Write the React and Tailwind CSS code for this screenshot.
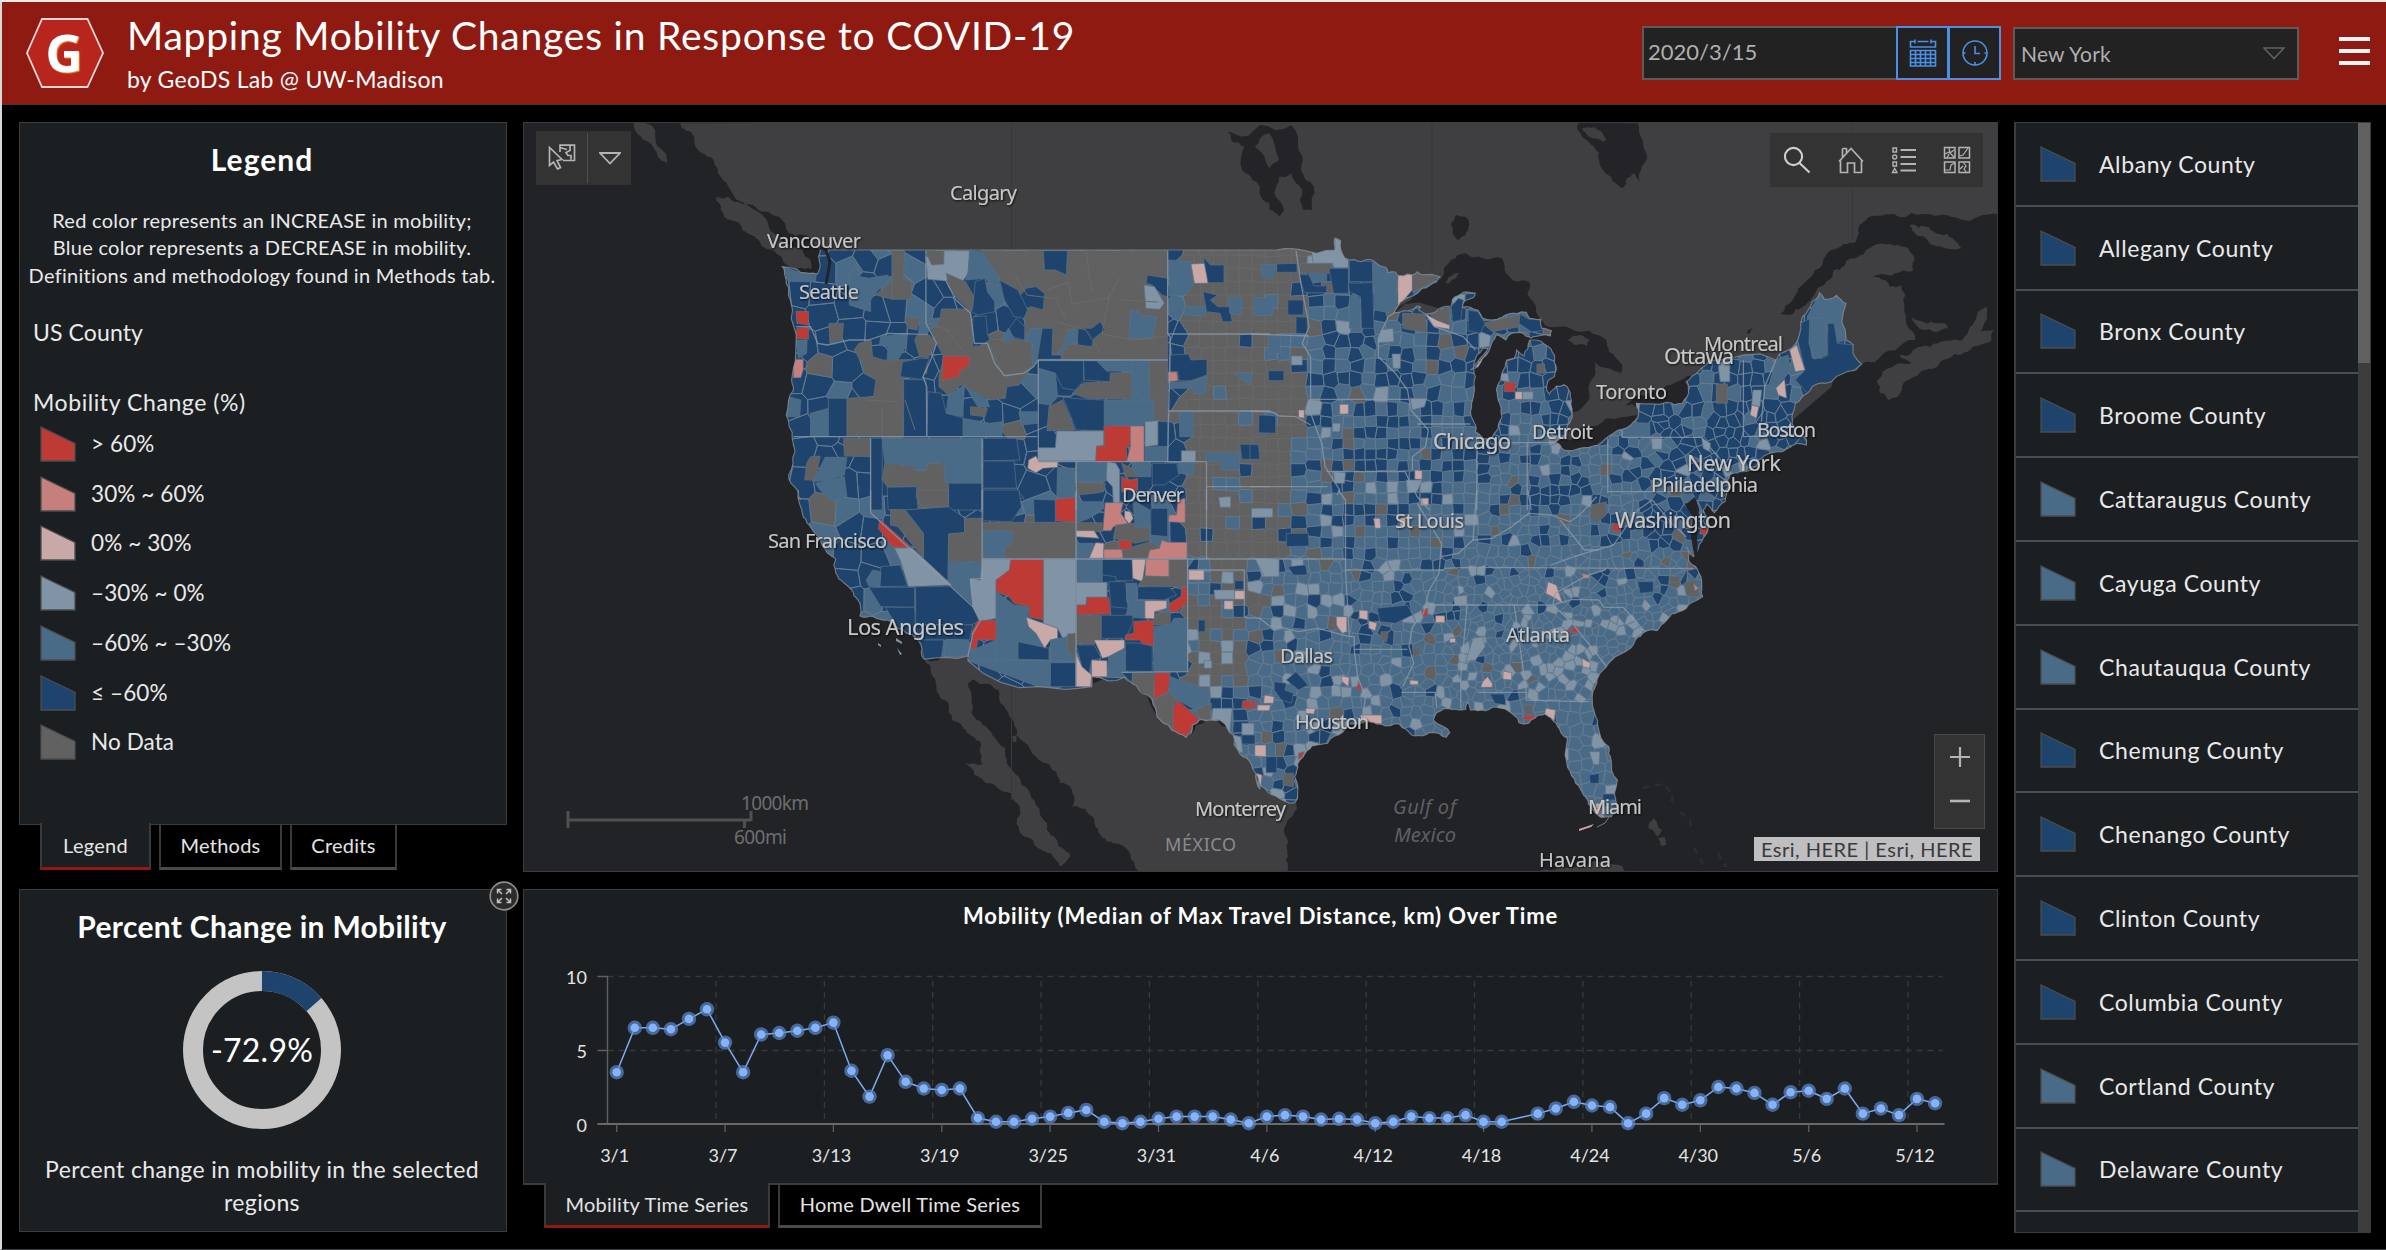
import React from "react";

/* ------------------------------------------------------------------ */
/* Palette and data                                                     */
/* ------------------------------------------------------------------ */

const C = {
  R: "#be3b35",
  P: "#c57f7d",
  K: "#c9a8a8",
  L: "#8094a6",
  M: "#496b88",
  N: "#1e446e",
  G: "#616161",
};

const LEGEND = [
  [C.R, "> 60%"],
  [C.P, "30% ~ 60%"],
  [C.K, "0% ~ 30%"],
  [C.L, "–30% ~ 0%"],
  [C.M, "–60% ~ –30%"],
  [C.N, "≤ –60%"],
  [C.G, "No Data"],
];

const COUNTIES = [
  ["Albany County", C.N],
  ["Allegany County", C.N],
  ["Bronx County", C.N],
  ["Broome County", C.N],
  ["Cattaraugus County", C.M],
  ["Cayuga County", C.M],
  ["Chautauqua County", C.M],
  ["Chemung County", C.N],
  ["Chenango County", C.N],
  ["Clinton County", C.N],
  ["Columbia County", C.N],
  ["Cortland County", C.M],
  ["Delaware County", C.M],
];

const SERIES = [
  3.5, 6.5, 6.5, 6.4, 7.1, 7.75, 5.5, 3.5, 6.05, 6.15, 6.3, 6.5, 6.85, 3.6,
  1.85, 4.65, 2.85, 2.4, 2.3, 2.4, 0.4, 0.15, 0.15, 0.35, 0.5, 0.75, 0.95,
  0.15, 0.05, 0.15, 0.35, 0.5, 0.5, 0.5, 0.3, 0.05, 0.5, 0.6, 0.5, 0.3, 0.35,
  0.3, 0.05, 0.15, 0.5, 0.4, 0.4, 0.6, 0.15, 0.15, null, 0.7, 1.05, 1.5, 1.25,
  1.15, 0.05, 0.7, 1.75, 1.3, 1.6, 2.5, 2.4, 2.1, 1.3, 2.15, 2.25, 1.7, 2.4,
  0.7, 1.05, 0.6, 1.7, 1.4,
];

const X_LABELS = [
  "3/1", "3/7", "3/13", "3/19", "3/25", "3/31", "4/6", "4/12", "4/18", "4/24",
  "4/30", "5/6", "5/12",
];

/* ------------------------------------------------------------------ */
/* Map geometry: four tiles share one projected plane                   */
/* ------------------------------------------------------------------ */

const TILE = { a: [510, 110], b: [1250, 110], c: [510, 490], d: [1250, 490] };
const SX = 760 / 1568;
const SY = 1 / 3;

function pts(tile, str) {
  const [ox, oy] = TILE[tile];
  return str
    .trim()
    .split(/\s+/)
    .map((p) => {
      const [x, y] = p.split(",").map(Number);
      return [ox + x * SX, oy + y * SY];
    });
}
const join = (...parts) => parts.flatMap(([t, s]) => pts(t, s));
const toD = (list, close = true) =>
  "M" + list.map((p) => p[0].toFixed(1) + " " + p[1].toFixed(1)).join("L") + (close ? "Z" : "");

function hash(a, b) {
  const s = Math.sin(a * 127.1 + b * 311.7) * 43758.5453;
  return s - Math.floor(s);
}

/* Splits long edges and nudges the midpoints so that coasts look ragged. */
function rough(list, amp = 0.16, depth = 2) {
  let out = list;
  for (let d = 0; d < depth; d++) {
    const next = [];
    out.forEach((p, i) => {
      const q = out[(i + 1) % out.length];
      next.push(p);
      const dx = q[0] - p[0];
      const dy = q[1] - p[1];
      const len = Math.hypot(dx, dy);
      if (len > 5 && len < 75) {
        const k = (hash(p[0], q[1]) - 0.5) * 2 * amp;
        next.push([(p[0] + q[0]) / 2 - dy * k, (p[1] + q[1]) / 2 + dx * k]);
      }
    });
    out = next;
  }
  return out;
}

const US = join(
  ["a", "562,470 600,488 634,492 640,470 636,440 640,420 1568,420"],
  ["b", "100,418 175,420 175,385 187,392 195,443 215,448 230,455 255,452 280,472 285,488 300,486 305,497 325,492 335,495 345,485 355,494 375,493 392,500 385,515 355,535 330,560 297,607 325,603 345,588 352,590 348,600 362,612 380,608 400,590 415,588 418,568 440,547 465,550 462,562 440,578 438,592 455,592 470,600 480,625 500,630 520,622 533,612 570,607 577,626 600,628 602,655 622,662 620,678 600,676 580,684 560,668 540,670 528,690 508,675 500,695 480,745 470,770 455,780 470,755 492,715 480,715 462,760 465,800 462,850 457,880 460,930 465,965 480,985 498,985 512,955 520,920 512,870 510,830 520,790 530,750 545,745 550,720 565,738 577,690 590,690 610,705 628,735 632,780 628,800 615,812 612,840 618,852 632,828 648,824 658,840 662,880 665,915 655,945 655,970 640,985 630,998 648,1020 665,1022 700,1012 735,985 768,958 800,925 802,900 797,880 860,877 892,880 902,860 900,815 925,785 950,752 1085,750 1090,735 1110,720 1130,690 1140,620 1160,575 1175,548 1185,568 1210,556 1230,580 1230,690 1245,705 1247,738 1262,762 1250,780 1225,790 1200,815 1175,820 1150,850 1125,880 1118,920 1125,960 1120,975 1145,978 1148,1005 1128,1000 1110,1015 1060,1038 1048,1050 1045,1068 1010,1085 990,1095 985,1110 990,1130 975,1165"],
  ["d", "988,0 980,35 958,68 942,42 935,60 948,105 940,135 925,175 915,200 900,170 905,210 922,235 932,290 934,320 915,335 895,360 870,372 848,405 840,422 815,425 795,450 785,475 745,512 722,550 712,590 706,620 712,675 718,710 740,770 745,810 758,870 757,950 745,980 725,982 712,968 698,942 688,915 685,905 672,880 655,832 650,795 655,745 642,730 632,700 608,672 588,684 575,700 555,698 552,685 525,656 500,652 470,662 455,660 450,635 445,658 405,655 385,668 378,690 400,710 412,728 405,742 390,730 370,728 355,738 340,738 322,718 308,702 270,702 240,692 205,702 192,725 160,760 128,768 110,800 98,822 92,860 98,925 92,938 60,925 40,910 22,888 12,850"],
  ["c", "1548,898 1545,870 1530,825 1505,790 1492,735 1480,715 1465,690 1425,688 1408,705 1405,730 1395,742 1365,720 1345,695 1335,680 1325,630 1300,605 1280,575 1268,562 1200,560 1200,590 1090,590 945,512 945,498 855,508 848,465 835,440 800,415 778,390 750,380 722,378 718,330 705,300 690,280 672,248 668,225 672,208 655,190 640,150 622,115 605,80 595,0"],
  ["a", "600,1170 580,1120 575,1095 588,1025 582,985 570,915 585,840 582,800 590,700 583,600 575,540 568,500"]
);

const CANADA = join(
  ["a", "350,40 380,80 395,130 420,150 435,200 455,240 500,285 555,320 575,370 625,400 640,430 900,440 1568,440"],
  ["b", "0,440 300,700 600,1080 1000,1080 1200,830 1262,762 1290,755 1372,690 1355,645 1350,590 1345,525 1320,530 1310,510 1285,500 1330,490 1368,480 1370,440 1352,410 1320,402 1285,408 1240,445 1205,480 1175,530 1140,590 1115,615 1095,612 1120,570 1150,510 1165,480 1190,430 1225,402 1250,395 1258,345 1285,318 1340,322 1440,316 1500,322 1545,312 1545,36"],
  ["a", "1568,36"]
);

const LAND = [
  CANADA,
  pts("a", "255,40 290,45 300,85 318,125 324,160 305,140 285,95"),
  pts("a", "425,262 470,275 505,300 530,330 545,370 580,410 620,450 622,478 595,475 560,440 520,410 490,370 455,330 435,300"),
  pts("b", "1293,815 1305,785 1365,760 1340,735 1385,710 1420,700 1470,690 1500,615 1520,590 1515,640 1508,665 1535,660 1530,690 1480,725 1430,750 1395,780 1370,800 1345,830 1335,862 1318,870 1300,850"),
  pts("b", "1360,345 1400,350 1450,385 1468,415 1445,418 1400,395"),
  pts("b", "1365,620 1395,640 1435,640 1440,655 1410,665 1375,645"),
  join(
    ["c", "855,508 900,495 945,498 1090,575 1200,590 1270,555 1335,680 1395,742 1440,680 1490,720 1548,880"],
    ["d", "22,885 95,930 96,960 78,990 77,1080 75,1145"],
    ["c", "1297,1145 1245,1060 1208,1010 1205,985 1160,950 1158,895 1135,880 1108,820 1085,800 1060,755 1045,735 1030,680 1012,640 1008,600 990,582 955,568 945,580 952,670 975,705 995,735 1022,775 1025,820 1050,860 1070,900 1085,945 1108,1000 1115,1035 1155,1090 1150,1110 1133,1128 1105,1085 1050,1020 1052,950 1035,910 1000,885 958,855 938,820 975,822 972,760 935,715 912,690 905,640 880,590"]
  ),
  pts("d", "595,1145 640,1125 700,1120 740,1120 775,1145"),
  pts("d", "822,1015 832,985 850,1020 840,1040"),
  pts("d", "842,1045 855,1040 858,1065 848,1068"),
  pts("c", "1035,740 1045,735 1045,755 1037,757"),
];

const WATER = [
  pts("b", "298,608 340,555 395,505 415,450 445,430 480,445 520,445 525,480 545,512 575,515 572,550 590,605 620,652 660,655 700,662 735,690 740,725 768,765 765,790 740,775 712,755 710,800 700,850 680,900 665,905 600,860 560,760 600,1000 470,1000 430,900 430,760 500,690 400,600"),
  pts("b", "625,1000 690,950 735,925 800,915 790,960 700,1025 650,1030"),
  pts("b", "775,885 800,855 850,840 890,810 915,800 905,885 800,890"),
  pts("b", "675,45 800,40 808,85 818,130 808,170 805,215 790,190 778,205 770,235 745,200 720,150 710,110 685,80"),
  pts("b", "415,345 425,315 445,320 452,345 445,375 430,392 418,370"),
  pts("b", "0,80 20,45 85,45 100,120 105,180 132,230 128,300 110,300 108,240 85,190 60,200 50,250 70,300 60,320 40,300 35,230 15,200 0,195"),
  pts("a", "1475,60 1500,75 1530,70 1532,130 1550,200 1568,260 1562,280 1540,215 1525,195 1510,180 1515,110 1490,95"),
  pts("b", "1025,668 1035,655 1045,650 1030,672"),
];
const ISLANDS = [
  pts("b", "655,690 680,675 700,690 695,708 670,705"),
  pts("b", "402,520 410,500 432,488 425,505 410,520"),
  pts("b", "685,55 710,50 735,90 728,95 700,80"),
  pts("b", "10,110 40,70 60,150 40,175"),
];

/* Hand-traced counties and blocks, painted over the generated cells. */
const SHAPES = `
aM 562,470 600,488 632,492 630,516 575,514
aM 715,460 722,500 740,505 780,495 783,510 760,540 750,558 744,570 744,605 700,585 700,500
aG 788,422 814,422 812,505 828,515 828,568 788,568
aG 755,555 788,512 788,568
aL 858,440 895,440 895,422 948,422 945,490 935,512 895,512 862,508
aG 858,422 895,422 895,462 870,465 862,440
aM 948,422 972,425 985,450 1000,460 1015,505 1000,540 980,505 940,510 948,470
aG 972,422 1357,422 1357,750 1137,748 1088,735 1060,690 1065,640 1060,620 1020,575 1010,505 985,450
aN 1100,422 1150,422 1148,495 1125,480 1103,480
aN 1050,560 1065,535 1085,530 1103,550 1100,600 1075,590 1055,600
aN 1315,495 1357,505 1357,560 1345,555 1325,525 1312,520
aL 1308,525 1330,530 1350,580 1340,598 1312,595
aM 1280,600 1298,605 1300,615 1335,620 1325,688 1277,685
aN 1165,655 1200,655 1218,635 1228,660 1205,685 1200,710 1172,705
aM 1150,660 1172,657 1170,700 1150,705 1137,735 1128,735 1145,695
aM 1075,655 1098,655 1090,745 1077,770 1078,700 1062,690
aN 1098,655 1120,655 1118,735 1137,735 1137,748 1088,748
aG 890,597 950,597 955,710 985,700 1020,800 1075,775 1050,825 1025,830 1022,865 990,870 930,825 905,855 885,830 885,800 895,740 880,700 865,650 888,620
aG 985,690 1035,685 1075,695 1078,770 1050,790 1020,800
aG 900,490 940,515 965,580 952,605 925,570 905,530
aR 893,738 948,738 948,765 928,785 928,800 891,812
aN 955,620 982,618 985,670 990,690 965,710 955,690
aN 1010,510 1048,540 1068,600 1060,625 1040,620 1020,570
aN 1045,625 1062,650 1062,690 1035,680 1030,655
aN 955,590 960,515 980,505 985,545 1000,575 1000,605 965,615 952,605
aM 1015,690 1028,655 1040,685 1025,700
aG 840,675 865,675 880,700 862,745 845,740 835,690
aM 765,680 820,670 818,705 800,750 778,748 780,710 762,705
aG 720,700 745,690 748,740 770,750 862,748 860,790 812,800 812,980 695,980 695,865 750,860 755,810 730,790 728,765 710,720
aN 810,755 850,745 865,745 850,808 805,800
aN 812,808 858,810 860,980 812,980
aG 658,640 688,640 685,690 660,700
aM 590,690 613,690 612,730 595,745
aP 585,748 605,748 605,780 600,803 585,803
aR 590,604 616,604 616,645 592,640
aR 592,655 616,650 616,688 590,685
aM 855,625 885,625 880,650 865,655 862,670 843,670 845,640
aG 815,620 845,625 840,660 820,655
aM 575,860 600,870 598,920 570,920
aM 620,910 657,895 657,980 620,980
aN 657,865 695,865 695,980 657,980
aN 862,845 890,850 900,908 935,925 935,980 860,980
aM 905,855 938,825 935,890 935,920 900,910
aM 940,830 985,870 990,890 965,890
aM 935,925 990,940 1015,935 1015,980 935,980
aM 1050,905 1088,905 1088,940 1055,945
aG 950,890 985,895 980,920 950,915
aN 1090,752 1183,752 1183,815 1165,840 1140,835 1125,790 1090,775
aN 1183,752 1210,752 1238,790 1238,815 1185,810
aM 1090,775 1125,790 1130,860 1115,885 1090,880
aM 1210,752 1283,752 1283,785 1230,782
aG 1160,850 1185,818 1238,815 1240,788 1283,788 1283,868 1190,865
aM 1283,752 1318,752 1320,868 1283,868
aG 1318,752 1357,752 1357,935 1328,930 1328,870 1320,868
aM 1226,870 1328,870 1328,935 1310,935 1305,948 1226,946
aG 1112,890 1140,870 1155,920 1165,960 1108,962
aN 1140,862 1190,868 1226,870 1226,962 1168,960 1152,900
aL 1128,963 1225,963 1225,1005 1210,1010 1210,1053 1090,1053 1090,1013 1125,1013
aR 1226,948 1280,948 1280,1000 1272,1015 1272,1055 1208,1055 1210,1008 1226,1008
aP 1280,948 1308,948 1308,1055 1272,1055 1280,1010
aL 1310,935 1337,932 1337,1005 1310,1010
aN 1337,935 1357,935 1357,1010 1337,1010
aM 1310,1010 1357,1010 1357,1053 1310,1053
aG 688,985 744,985 744,1040 690,1038
aG 620,1040 640,1038 630,1110 608,1110 612,1060
aM 650,1042 695,1042 690,1095 655,1110 625,1115
aM 630,1120 690,1100 695,1160 665,1175 640,1140
aN 744,985 768,985 768,1200 744,1200
aM 768,985 974,985 974,1118 898,1118 895,1058 862,1058 858,1080 838,1080 835,1068 773,1058
aG 773,1060 835,1070 838,1082 858,1082 862,1060 895,1060 898,1118 905,1120 905,1200 840,1200 840,1130 778,1130 768,1110
aN 905,1120 974,1120 974,1200 905,1200
aN 778,1132 838,1130 842,1200 780,1200
aN 976,985 1045,985 1052,1050 976,1053
aN 976,1053 1040,1053 1045,1135 976,1135
aN 976,1135 1045,1135 1060,1165 976,1165
aK 1085,1038 1092,1055 1130,1055 1130,1072 1100,1075 1085,1088 1068,1075 1070,1050
aM 1130,1072 1165,1075 1165,1165 1128,1165
aM 1168,1058 1232,1058 1228,1115 1168,1115
aL 1232,1055 1250,1060 1258,1080 1258,1190 1245,1185 1243,1130 1230,1110
aG 1262,1060 1283,1075 1295,1100 1270,1100
aM 1283,1058 1322,1058 1322,1100 1295,1100 1283,1075
aG 1168,1117 1228,1120 1225,1145 1205,1150 1170,1155
aN 1325,1060 1375,1060 1380,1095 1350,1125 1325,1125
aM 1378,1058 1412,1058 1410,1095 1380,1090
aR 1262,1100 1280,1110 1295,1105 1295,1140 1262,1145
aM 1360,450 1405,455 1405,490 1412,520 1395,555 1360,558
aK 1405,462 1438,460 1440,520 1412,520
aN 1430,440 1445,465 1473,465 1473,518 1440,518
aN 1430,545 1460,555 1445,570 1460,590 1485,590 1490,635 1470,635 1465,610 1437,605
aM 1392,590 1435,590 1435,618 1392,615
aM 1482,563 1510,560 1510,615 1485,610
aM 1535,565 1568,565 1568,615 1538,615
aN 1362,735 1400,732 1405,750 1438,748 1438,795 1405,812 1380,812 1378,785 1362,785
aP 1358,786 1376,786 1378,812 1358,815
aM 1360,816 1405,815 1438,800 1435,852 1412,850 1408,835 1360,835
aM 1495,790 1530,788 1530,820 1515,815
aM 1380,905 1410,905 1410,980 1382,980
aL 1385,1022 1415,1022 1415,1055 1385,1055
aM 1435,1028 1505,1028 1505,1080 1470,1080 1465,1055 1435,1055
aN 1506,1003 1545,1003 1545,1048 1510,1048
aN 1545,915 1568,915 1568,970 1545,970
cN 815,60 905,50 938,85 938,128 905,132 903,285 852,210 853,130
cG 785,58 815,60 853,130 853,205 800,110 785,105
cG 840,0 905,0 905,50 850,52 838,20
cG 938,85 974,85 974,215 905,215 905,132 938,128
cM 905,217 972,217 972,265 950,268 952,340 905,285
cR 763,88 828,172 790,172 760,115
cL 793,174 830,174 912,285 822,290 805,210
cN 837,290 912,288 955,345 968,395 950,405 837,405
cN 765,230 805,225 820,288 763,290
cM 735,270 748,240 765,245 763,290 740,288
cN 740,292 835,292 835,352 765,350
cN 775,352 835,352 837,440 800,415
cN 837,405 955,405 948,450 845,450
cM 900,448 945,450 958,480 945,498 895,500
cN 845,450 895,450 890,503 855,507
cG 974,97 1168,97 1168,207 974,207
cM 976,122 1037,122 1035,160 1020,175 1020,205 976,205
cN 976,0 1050,0 1055,50 1035,95 976,92
cR 1125,28 1167,22 1167,97 1125,92
cN 1080,28 1125,30 1125,97 1082,97
cL 974,208 1035,208 1035,240 1003,270 1003,385 970,395 955,350 948,265 970,270
cL 1100,208 1168,208 1168,430 1140,445 1130,415 1100,400
cR 1033,208 1100,208 1100,390 1070,380 1072,350 1040,340 1030,320 1003,305 1003,270 1030,240
cM 1003,305 1040,345 1070,350 1068,380 1090,400 1100,475 1115,475 1115,512 1003,512
cM 1003,450 1003,512 945,512 955,480
cN 1048,455 1112,475 1112,510 1048,508
cK 1065,382 1130,415 1130,445 1115,450 1103,475 1085,430 1070,410
cR 965,392 1003,390 1003,450 965,450 962,478 950,475 955,420
cM 945,512 1115,512 1115,590 1090,590
cM 1115,450 1150,440 1165,480 1165,515 1115,512
cN 1115,518 1167,518 1167,590 1115,590
cG 1150,432 1167,430 1167,515 1150,480
cM 1168,208 1222,208 1222,275 1168,275
cN 1222,208 1285,208 1285,272 1250,272 1250,260 1222,255
cK 1283,208 1312,208 1305,275 1285,265
cP 1312,208 1360,208 1360,260 1310,258
cG 1360,208 1397,208 1397,290 1295,288 1310,258 1360,262
cL 1168,277 1232,277 1232,322 1190,322 1188,345 1168,345
cR 1170,345 1190,345 1190,322 1235,322 1240,372 1170,374
cN 1235,275 1270,275 1275,355 1240,350
cM 1272,280 1293,280 1293,340 1272,335
cN 1295,290 1360,290 1375,315 1350,330 1295,328
cM 1280,330 1310,332 1310,385 1270,380
cR 1385,292 1398,290 1398,335 1375,368 1358,360 1362,340 1385,318
cK 1310,332 1355,332 1355,355 1330,365 1330,387 1310,385
cG 1168,376 1220,376 1220,445 1205,462 1168,462
cN 1220,376 1285,376 1285,400 1270,445 1220,445
cR 1287,395 1328,390 1328,466 1305,465 1300,450 1270,450 1270,435 1287,430
cM 1330,410 1362,405 1370,385 1398,385 1398,545 1328,545 1328,470
cG 1330,370 1362,365 1362,405 1330,405
cN 1270,458 1300,460 1325,468 1325,545 1270,543
cK 1205,450 1268,450 1268,475 1235,500 1222,505 1215,480
cM 1235,500 1268,475 1270,560 1232,560
cN 1168,465 1205,465 1220,505 1200,510 1195,550 1180,530
cK 1200,510 1232,512 1232,560 1200,560
cK 1168,490 1180,530 1200,555 1198,590 1168,590
cM 1168,35 1225,35 1225,55 1195,85 1168,100
cP 1228,38 1265,38 1260,70 1275,100 1245,110 1240,122 1223,122
cK 1268,62 1280,65 1286,85 1278,102 1268,85
cG 1250,105 1290,100 1320,115 1320,150 1290,160 1245,145
cG 1168,98 1222,98 1222,125 1168,122
cK 1168,122 1205,122 1215,145 1168,140
cM 1168,160 1205,160 1195,205 1168,205
cK 1208,158 1225,160 1225,205 1195,205
cG 1262,180 1320,155 1340,170 1318,205 1265,205
cP 1225,178 1262,178 1265,205 1225,205
cR 1255,150 1282,152 1282,178 1258,178
cP 1345,150 1357,157 1397,157 1397,207 1315,207 1320,180 1340,175
cN 1322,55 1357,55 1357,140 1322,135
cP 1378,30 1393,25 1393,98 1358,95 1360,75 1375,75
cM 1285,30 1320,60 1320,115 1290,110
cN 1262,548 1285,548 1283,580
cG 1285,548 1328,548 1328,628 1300,600 1283,580
cR 1330,548 1362,548 1358,605 1328,628
cM 1362,560 1400,580 1442,600 1445,630 1415,660 1380,632 1360,605
cG 1328,628 1360,608 1380,632 1368,645 1368,720 1335,680
cR 1380,633 1422,688 1408,710 1395,742 1368,720 1368,650
cG 1415,660 1447,640 1445,690 1425,688
cL 1450,655 1490,655 1485,730 1465,690 1447,690
cL 1510,700 1535,700 1535,735 1510,735
cN 1510,735 1537,735 1537,762 1510,762
cL 1492,735 1508,740 1512,790 1500,780
cR 1512,632 1537,632 1540,655 1510,655
cK 1400,240 1432,240 1432,270 1400,270
cL 1452,300 1495,300 1495,328 1455,328
cK 1495,302 1516,302 1516,328 1495,328
cK 1473,332 1492,332 1492,358 1473,358
cN 1420,390 1434,390 1434,425 1420,425
cN 1495,272 1514,272 1514,298 1495,298
cL 1432,512 1448,512 1448,535 1432,535
cL 1532,55 1568,55 1568,82 1532,82
cL 1462,22 1487,20 1487,52 1465,52
cL 1538,205 1568,208 1568,260 1552,260
bL 127,420 175,420 175,385 187,392 195,443 203,450 203,473 173,473 170,460 130,460
bG 105,460 168,462 168,490 100,488
bM 120,490 158,492 158,515 128,515
bN 100,492 122,495 132,528 155,528 158,515 158,548 112,548
bN 205,450 253,455 253,515 205,515
bN 163,475 203,475 203,550 172,550
bM 253,455 280,475 303,492 303,590 285,608 257,600
bK 305,495 335,492 335,540 305,590
bG 335,495 345,485 392,500 355,535 335,545
bN 203,520 253,518 256,655 230,655 228,560 205,545
bM 205,560 215,550 228,565 228,655 205,655
bK 362,612 385,630 412,645 412,658 380,650
bG 315,610 362,612 365,668 315,655
bG 370,612 412,590 412,645 385,630
bK 490,725 478,775 465,770
bG 480,640 570,610 555,650 500,665
bN 450,600 470,605 485,640 475,670 450,662
bN 557,612 575,627 600,630 605,662 580,665 555,640
bN 415,590 430,565 440,570 435,630 418,635
bR 525,817 547,817 547,845 525,845
bK 547,845 562,845 562,868 547,868
bL 562,845 584,845 584,868 562,868
bG 592,762 608,762 608,790 592,790
bL 515,790 532,790 535,815 518,812
bM 1150,620 1175,550 1190,568 1210,557 1230,580 1230,690 1205,700 1205,640 1190,640 1190,735 1160,750 1150,720
bN 1135,640 1157,625 1155,700 1160,745 1180,745 1192,735 1192,640 1205,640 1212,700 1245,705 1247,738 1262,762 1240,785 1200,815 1150,850 1125,810 1145,780 1130,690
bM 1155,625 1188,625 1190,730 1165,748 1153,700
bM 1085,750 1110,735 1115,780 1090,830 1068,840
bK 1113,720 1128,705 1145,780 1125,785
bK 1085,835 1103,808 1107,865 1090,855
bK 1035,885 1050,890 1045,925 1032,915
bL 1038,840 1056,840 1052,890 1035,885
bL 965,755 990,755 990,815 970,815
bG 962,822 985,822 985,880 962,880
bM 768,960 800,938 825,940 825,982 768,982
bL 828,985 850,985 850,1018 830,1018
bL 932,985 950,1000 948,1025 935,1015
bK 185,883 203,883 203,912 185,912
bK 100,900 112,900 112,925 100,922
bL 170,940 187,940 185,965 170,965
bL 330,865 365,865 360,890 335,900
bK 340,1080 355,1082 355,1108 340,1108
bK 352,1165 368,1165 368,1187 352,1187
bL 270,660 295,655 297,695 262,698
bL 293,732 310,732 310,775 295,775
bL 172,1085 197,1088 195,1120 175,1120
bL 322,1110 355,1110 345,1145 325,1150
bL 85,738 108,738 108,765 85,765
bM 8,563 47,563 47,617 8,617
bM 38,678 63,678 63,730 38,730
bN 38,782 70,782 70,812 38,812
bN 18,915 53,918 53,970 18,968
bN 0,1003 18,1005 20,1048 0,1048
bN 55,462 97,460 97,487 55,487
bM 22,462 55,465 45,510 25,500
bN 95,620 118,622 118,672 95,670
bN 78,570 110,570 110,615 78,615
dL 3,55 47,55 47,82 3,82
dN 75,130 120,130 122,168 75,170
dL 10,205 60,208 60,260 30,260
dL 85,208 110,208 110,232 85,232
dK 355,25 368,25 368,45 355,45
dK 255,85 268,85 270,115 258,115
dK 308,85 320,82 322,110 310,112
dR 748,100 765,105 762,130 747,120
dG 705,45 735,35 735,75 715,98 702,80
dR 930,115 945,112 942,132 928,132
dK 615,275 632,285 645,340 630,325 610,310
dP 685,250 700,255 700,265 688,265
dG 895,280 918,268 925,300 915,320 900,315
dP 915,280 925,295 918,303
dG 865,260 888,258 885,275 868,278
dN 800,275 832,275 832,305 805,310
dK 178,380 200,380 200,425 190,430 178,405
dK 225,360 243,362 243,390 225,385
dK 245,392 262,400 258,422 245,415
dR 355,360 367,355 365,380 355,378
dK 383,377 402,377 402,398 383,398
dR 662,418 674,408 680,430 668,428
dR 650,425 662,415 658,435
dR 220,600 224,572 232,600
dK 188,558 205,562 203,590 190,575
dK 480,575 490,560 500,580 500,592 476,592
dK 522,543 540,548 540,570 522,568
dK 685,505 703,520 700,535 686,530
dK 330,570 347,572 347,584 330,584
dK 412,445 424,445 424,458 412,458
dL 460,445 480,440 485,470 465,510 445,515
dL 420,320 448,315 448,345 422,345
dG 335,475 352,470 350,495 338,500
dG 270,425 285,425 282,455 272,450
dN 495,612 525,612 528,645 505,640
dK 228,675 272,675 272,702 228,695
dK 610,655 630,660 628,692 608,672
dR 568,675 592,678 580,690 562,688
dG 565,645 582,645 582,672 568,672
dR 0,630 12,655 0,655
dK 15,645 42,645 40,662 15,662
dK 30,615 50,620 48,640 28,640
dR 100,790 112,785 108,800 100,808
dK 10,765 33,765 33,800 10,798
dK 12,850 25,855 22,890
dG 68,850 90,850 90,890 68,885
dN 33,800 55,800 55,848 33,848
dK 712,940 725,940 722,980 712,970
dN 728,912 755,912 755,930 728,930
dN 700,855 720,850 720,880 702,880
dL 700,785 722,785 720,825 708,822
dK 115,655 135,655 132,672 115,670
dN 50,575 75,580 72,600 90,610 85,640 65,630 50,600
dN 75,570 95,545 120,585 100,600
dN 78,230 115,225 118,255 90,255
dN 262,355 325,345 335,375 300,400 268,395
`
  .trim()
  .split("\n")
  .map((row) => ({ fill: C[row[1]], d: toD(pts(row[0], row.slice(3))) }));

const BORDERS = `
a 858,422 858,640 880,700 868,750 852,800 860,830 860,980
a 590,650 620,650 635,700 655,705 700,690 740,690 780,670 862,673
a 585,980 1088,980
a 895,500 920,570 950,610 958,700 985,700 1000,760 1020,797 1060,790 1080,770 1090,750 1357,750
a 1090,750 1090,1055 1437,1055
a 1357,422 1357,672 1362,680 1357,1055
a 1357,672 1568,672
a 1357,903 1568,903
a 744,985 744,1200
a 974,985 974,1200
a 1168,1055 1168,1200
a 1437,1055 1437,1200
a 1437,1130 1568,1130
c 744,0 744,68 955,350 970,392 955,430 945,498
c 974,0 974,265 950,268 955,350
c 974,207 1527,207
c 1168,0 1168,590
c 1437,0 1437,207
c 1398,207 1398,545 1262,547
c 1398,240 1515,240 1515,380 1527,385
b 95,422 105,520 122,650 108,700 125,740 125,865
b 0,672 122,678
b 125,868 328,868
b 0,903 45,905 60,918 95,920 125,945
b 265,740 265,685 285,620 300,607
b 265,740 300,790 325,840 332,900 368,960 362,1010 335,1040 335,1080
b 125,865 120,890 148,1000 155,1070 185,1140 180,1155
b 158,1085 320,1085 345,1160 370,1200
b 345,942 455,942
b 468,990 468,1200
b 572,998 572,1200
b 515,998 632,998
b 738,985 738,1150
b 768,960 768,982 932,982 965,1040 950,1080 990,1120
b 738,1145 930,1145
b 1018,750 1018,980
b 1018,980 1118,975
b 1085,750 1062,830 1055,935
b 0,1130 160,1130
b 362,612 380,650 440,680 465,720
d 197,155 197,240 400,240
d 182,0 197,30 197,155
d 0,207 197,207
d 197,240 205,440 215,440 215,478 325,478
d 0,383 20,385 40,408 60,410 100,425 140,415 205,440
d 370,345 625,345
d 448,232 800,235 915,235
d 448,345 435,560 435,655
d 545,345 560,500 570,607 470,607
d 312,607 382,607 385,650
d 570,607 570,630 680,635 700,635
d 625,345 665,400 725,510 735,530
d 625,345 665,328 720,330 730,352 770,352 815,425
d 345,40 395,160 390,250 370,300 358,370 335,410 328,470 338,520 315,590
d 395,200 430,190 460,150 500,145 540,110 575,70 620,75 660,95 680,75 715,20
d 468,0 460,150
d 573,0 580,60
d 215,478 222,560 238,620 232,690
d 448,232 400,235
d 620,225 690,190 750,165 800,60 830,30
d 625,345 630,310 690,260 735,238
d 640,90 690,180 720,180
d 830,30 870,100 900,140
`
  .trim()
  .split("\n")
  .map((row) => toD(pts(row[0], row.slice(2)), false));

/* County cells: clipped half-planes around jittered seeds. */
const REGIONS = [
  [740, 230, 1187, 860, 24, 0.6],
  [1187, 230, 1310, 560, 13, 0.12],
  [1310, 230, 1880, 405, 13, 0.35],
  [1310, 405, 1480, 560, 11, 0.16],
  [1480, 405, 1620, 560, 10, 0.35],
  [1620, 405, 1880, 560, 10.5, 0.75],
  [1187, 560, 1250, 860, 11.5, 0.1],
  [1250, 560, 1350, 860, 11.5, 0.4],
  [1350, 560, 1450, 860, 10.5, 0.5],
  [1450, 560, 1720, 620, 8.8, 0.65],
  [1450, 620, 1720, 700, 8.8, 0.7],
  [1450, 700, 1720, 860, 12, 0.35],
];

function weights(x, y) {
  // order: N, M, L, G, K
  if (x < 1187) return [80, 12, 0, 8, 0];
  if (x < 1290 && y < 460) return [4, 7, 0, 89, 0];
  if (x < 1310 && y < 560) return [10, 13, 2, 75, 0];
  if (y < 405 && x < 1640) return [50, 38, 4, 8, 0];
  if (y < 560 && x < 1400) return [42, 42, 5, 11, 0];
  if (y < 505 && x < 1640) return [38, 57, 3, 2, 0];
  if (x >= 1640 && y < 470) return [78, 20, 1, 1, 0];
  if (x >= 1600 && y < 545) return [54, 38, 3, 5, 0];
  if (y < 560) return [20, 69, 5, 6, 0];
  if (x < 1250 && y < 715) return [22, 20, 7, 51, 0];
  if (x < 1350 && y < 625) return [14, 60, 15, 11, 0];
  if (x >= 1350 && x < 1415 && y < 650) return [30, 60, 7, 3, 0];
  if (x > 1520 && x < 1630 && y > 610 && y < 700) return [2, 68, 28, 2, 0];
  if (x > 1520 && y >= 700) return [3, 92, 4, 1, 0];
  if (x < 1355) return [19, 62, 16, 3, 0];
  if (y < 620) return [11, 78, 7, 4, 0];
  return [4, 82, 12, 2, 0];
}

const CELLS = (() => {
  const seeds = [];
  REGIONS.forEach(([x0, y0, x1, y1, s, j], r) => {
    for (let y = y0 + s / 2; y < y1; y += s) {
      for (let x = x0 + s / 2; x < x1; x += s) {
        const a = hash(x + r * 3.1, y);
        const b = hash(y + 17.3, x + r);
        const sx = x + (a - 0.5) * s * j * 1.3;
        const sy = y + (b - 0.5) * s * j * 1.3;
        seeds.push([sx, sy, s]);
      }
    }
  });
  const grid = new Map();
  const B = 30;
  seeds.forEach((s) => {
    const k = Math.floor(s[0] / B) + ":" + Math.floor(s[1] / B);
    if (!grid.has(k)) grid.set(k, []);
    grid.get(k).push(s);
  });
  const out = [];
  const keys = ["N", "M", "L", "G", "K"];
  seeds.forEach((s) => {
    const h = s[2] * 1.2;
    let poly = [
      [s[0] - h, s[1] - h],
      [s[0] + h, s[1] - h],
      [s[0] + h, s[1] + h],
      [s[0] - h, s[1] + h],
    ];
    const gx = Math.floor(s[0] / B);
    const gy = Math.floor(s[1] / B);
    const reach = s[2] > 20 ? 2 : 1;
    for (let i = -reach; i <= reach; i++) {
      for (let k = -reach; k <= reach; k++) {
        for (const n of grid.get(gx + i + ":" + (gy + k)) || []) {
          if (n === s) continue;
          const dx = n[0] - s[0];
          const dy = n[1] - s[1];
          if (dx * dx + dy * dy > 9 * s[2] * s[2]) continue;
          const c = (n[0] * n[0] + n[1] * n[1] - s[0] * s[0] - s[1] * s[1]) / 2;
          const next = [];
          for (let m = 0; m < poly.length; m++) {
            const p = poly[m];
            const q = poly[(m + 1) % poly.length];
            const fp = p[0] * dx + p[1] * dy - c;
            const fq = q[0] * dx + q[1] * dy - c;
            if (fp <= 0) next.push(p);
            if (fp <= 0 !== fq <= 0) {
              const t = fp / (fp - fq);
              next.push([p[0] + (q[0] - p[0]) * t, p[1] + (q[1] - p[1]) * t]);
            }
          }
          poly = next;
        }
      }
    }
    if (poly.length < 3) return;
    const w = weights(s[0], s[1]).slice();
    w[0] *= 0.45 + 1.1 * hash(Math.floor(s[0] / 34), Math.floor(s[1] / 30));
    let t = hash(s[0] * 1.7, s[1] * 0.9) * w.reduce((a, b) => a + b, 0);
    let idx = 0;
    while (idx < 4 && t > w[idx]) {
      t -= w[idx];
      idx++;
    }
    out.push({ k: keys[idx], d: toD(poly) });
  });
  const order = ["G", "L", "K", "M", "N"];
  return order.map((k) => ({
    fill: C[k],
    line: k === "G" ? "#686868" : "#657b8e",
    d: out.filter((o) => o.k === k).map((o) => o.d).join(""),
  }));
})();

const US_D = toD(rough(US, 0.13, 2));

const LABELS = [
  ["Calgary", 950, 200, 67, 20],
  ["Vancouver", 767, 248, 94, 20],
  ["Seattle", 799, 299, 60, 20],
  ["Denver", 1122, 502, 62, 20],
  ["San Francisco", 768, 548, 119, 20],
  ["Los Angeles", 847, 635, 117, 22],
  ["Monterrey", 1195, 816, 91, 20],
  ["Montreal", 1704, 351, 79, 20],
  ["Ottawa", 1664, 364, 70, 22],
  ["Toronto", 1596, 399, 71, 20],
  ["Detroit", 1532, 439, 61, 20],
  ["Chicago", 1433, 449, 78, 22],
  ["Boston", 1757, 437, 59, 20],
  ["New York", 1687, 471, 94, 22],
  ["Philadelphia", 1651, 492, 107, 20],
  ["St Louis", 1395, 528, 69, 20],
  ["Washington", 1615, 528, 116, 22],
  ["Atlanta", 1506, 642, 64, 20],
  ["Dallas", 1280, 663, 53, 20],
  ["Houston", 1295, 729, 74, 20],
  ["Miami", 1588, 814, 54, 20],
  ["Havana", 1539, 867, 72, 20],
];

function UsMap() {
  return (
    <svg viewBox="524 123 1473 748" className="block h-full w-full" preserveAspectRatio="none">
      <defs>
        <clipPath id="us">
          <path d={US_D} />
        </clipPath>
        <filter id="halo" x="-10%" y="-30%" width="120%" height="160%">
          <feDropShadow dx="0.8" dy="1" stdDeviation="0.9" floodColor="#111" floodOpacity="0.9" />
        </filter>
      </defs>
      <rect x="520" y="120" width="1480" height="760" fill="#222327" />
      {LAND.map((p, i) => (
        <path key={i} d={toD(rough(p, 0.18, 3))} fill="#3f3f41" />
      ))}
      <g fill="#232328">
        {WATER.map((p, i) => (
          <path key={i} d={toD(rough(p, 0.18, 2))} />
        ))}
      </g>
      <g fill="#3f3f41">
        {ISLANDS.map((p, i) => (
          <path key={i} d={toD(rough(p, 0.15, 2))} />
        ))}
      </g>
      <path d="M1011.5 123V250M1432 123V270M1852.500 123V240M1011.500 687V800" stroke="#38383a" strokeWidth="1" />
      <path
        d="M1643 788l20-4 10 10-2 14M1680 812l10 8 2 12M1694 848l10 18M1718 853l8 14"
        fill="none"
        stroke="#2d2d31"
        strokeWidth="2.500"
        strokeDasharray="7 5"
      />
      <path d={US_D} fill="#5b6570" />
      <g clipPath="url(#us)">
        {CELLS.map((c) => (
          <path key={c.fill} d={c.d} fill={c.fill} stroke={c.line} strokeWidth="0.9" />
        ))}
        {SHAPES.map((s, i) => (
          <path key={i} d={s.d} fill={s.fill} stroke="#5d7184" strokeOpacity="0.75" strokeWidth="0.9" />
        ))}
        <path
          d="M1015 275l12 20 30 4 8 20M1048 290l20-8 4 22 36-6 12-20M1086 252l6 40M1110 292l-8 42 30 6 34-4M1120 300l38 2M1058 322l28 8 14 22M905 400l10 30M946 330l20 24M925 322l28 10M866 400l32 2M882 408v28"
          fill="none"
          stroke="#6b6b6b"
          strokeWidth="1"
        />
        <g fill="none" stroke="#8d9ba8" strokeOpacity="0.75" strokeWidth="1.300" strokeLinejoin="round">
          {BORDERS.map((d, i) => (
            <path key={i} d={d} />
          ))}
        </g>
      </g>
      <path d={US_D} fill="none" stroke="#8b8f93" strokeOpacity="0.7" strokeWidth="1.200" />
      <g fill={C.L}>
        <path d="M878 643l3 2v2l-3-2zM896 638l6 4v2l-6-3zM897 648l5 6-2 1z" />
        <path d="M1579 829l15-5-3 3-12 4z" fill={C.K} />
        <path d="M1597 827l8-4 6-9" fill="none" stroke="#777" />
      </g>
      <path d="M820 248l6 2 4 12-4 22M817 256l-3 6 4 4" fill="none" stroke="#222327" strokeWidth="3" />
      <path d="M1685 505l8 12-2 20 4 22 3 4-1-24 2-30-4-12" fill="#222327" />
      <g
        fill="#c6c6c6"
        filter="url(#halo)"
        style={{ fontFamily: '"Noto Sans", "Open Sans", sans-serif' }}
      >
        {LABELS.map(([t, x, y, w, s]) => (
          <text key={t} x={x} y={y} fontSize={s} textLength={w}>
            {t}
          </text>
        ))}
      </g>
      <g style={{ fontFamily: '"Noto Sans", "Open Sans", sans-serif' }}>
        <text x="1165" y="851" fontSize="18" textLength="71" fill="#8b8b8d">MÉXICO</text>
        <text x="1393" y="814" fontSize="20" textLength="63" fontStyle="italic" fill="#5f5f63">Gulf of</text>
        <text x="1394" y="842" fontSize="20" textLength="62" fontStyle="italic" fill="#5f5f63">Mexico</text>
        <text x="741" y="810" fontSize="19" textLength="68" fill="#6d6d6f">1000km</text>
        <text x="734" y="844" fontSize="19" textLength="53" fill="#6d6d6f">600mi</text>
      </g>
      <path d="M568 811v17M568 820H751M751 811v10M744.500 820v8" fill="none" stroke="#505050" strokeWidth="3" />
    </svg>
  );
}

/* ------------------------------------------------------------------ */
/* Icons                                                                */
/* ------------------------------------------------------------------ */

function Swatch({ color }) {
  return (
    <svg width="36" height="36" viewBox="-1 -1 36 36" className="shrink-0">
      <path d="M0 0L34 16.500V34H0Z" fill={color} stroke="#4a4d50" strokeWidth="1.300" />
    </svg>
  );
}

function Logo() {
  return (
    <svg width="78" height="70" viewBox="0 0 78 70" className="shrink-0">
      <path d="M16 1H61.500L77 35L61.500 69H16L1 35Z" fill="#b7251d" stroke="#e9d8d6" strokeWidth="1.800" />
      <text
        x="38.200"
        y="53.500"
        textAnchor="middle"
        fontSize="52"
        fontWeight="700"
        fill="#fff"
        className="font-['Open_Sans'] [text-shadow:1px_1px_1px_#e08a2e]"
      >
        G
      </text>
    </svg>
  );
}

function CalendarIcon() {
  return (
    <svg width="28" height="28" viewBox="0 0 28 28" fill="none" stroke="#4a90e8" strokeWidth="1.600">
      <path d="M6 2.500H1.500V8H26.500V2.500H22M8.500 2.500h11M6 .5v4M22 .5v4" />
      <path d="M1.500 11.500H26.500V27H1.500ZM1.500 15.500h25M1.500 19.500h25M1.500 23.500h25M6.500 11.500V27M11.500 11.500V27M16.500 11.500V27M21.500 11.500V27" />
    </svg>
  );
}

function ClockIcon() {
  return (
    <svg width="26" height="26" viewBox="0 0 26 26" fill="none" stroke="#4a90e8" strokeWidth="1.600">
      <circle cx="13" cy="13" r="12" />
      <path d="M13 6v7.500h5M1 13h2.500M13 22v3M22.500 13h2" />
    </svg>
  );
}

const TOOL = { fill: "none", stroke: "#b4b4b4", strokeWidth: 1.7 };

const SearchIcon = () => (
  <svg width="28" height="28" viewBox="0 0 28 28" {...TOOL} stroke="#d0d0d0" strokeWidth="2.100">
    <circle cx="10.500" cy="10.500" r="8.600" />
    <path d="M16.500 17L26.500 26.500" />
  </svg>
);
const HomeIcon = () => (
  <svg width="28" height="28" viewBox="0 0 28 28" {...TOOL}>
    <path d="M2 15.500L14 2.500L26 15.500M9.500 2.500V7M5.500 2.500h4.500M5.500 2.500V11M3.500 14V26.500H10.500V17H17.500V26.500H24.500V14" />
  </svg>
);
const ListIcon = () => (
  <svg width="26" height="28" viewBox="0 0 26 28" {...TOOL}>
    <path d="M9.500 4H25M9.500 11H25M9.500 18H25M9.500 24.500H25" strokeWidth="1.900" />
    <path d="M2 2h3.500v4H2ZM2 16h3.500v4H2ZM3.700 22.500L6 26.500H1.500Z" strokeWidth="1.400" />
    <circle cx="3.700" cy="11" r="2" strokeWidth="1.400" />
  </svg>
);
const GridIcon = () => (
  <svg width="28" height="28" viewBox="0 0 28 28" {...TOOL} strokeWidth="1.500">
    <path d="M1.500 1.500h10.500v10.500H1.500ZM16 1.500h10.500v10.500H16ZM1.500 16h10.500v10.500H1.500ZM16 16h10.500v10.500H16Z" />
    <path d="M2 8l4-2 5 5M6 2l1 5 4-3M4 12l2-4M17 10l3-1 5-7M2 24h5l1-5 4-2M20 16l3 4-2 3 3 4M20 20l-3 3" strokeWidth="1.200" />
  </svg>
);
const SelectIcon = () => (
  <svg width="28" height="26" viewBox="0 0 28 26" {...TOOL}>
    <path d="M12 8V1.200H26.500V16.500H15M22 1.500v5l-4 2 2 3h3v4M12 3.500l7 2" />
    <path d="M1.500 3.500V21.500L5.500 18L9.500 25L12.500 23.500L9 16.500L14 15.500Z" fill="#333" />
  </svg>
);

function ExpandButton() {
  return (
    <svg width="30" height="30" viewBox="0 0 30 30" className="absolute -top-[9px] -right-[13px]">
      <circle cx="15" cy="15" r="13.800" fill="#2b2b2b" stroke="#8c8c8c" strokeWidth="1.700" />
      <path
        d="M8.500 12.500V8.500H12.500M8.500 8.500L13 13M17.500 8.500H21.500V12.500M21.500 8.500L17 13M8.500 17.500V21.500H12.500M8.500 21.500L13 17M17.500 21.500H21.500V17.500M21.500 21.500L17 17"
        fill="none"
        stroke="#c0c0c0"
        strokeWidth="1.500"
      />
    </svg>
  );
}

/* ------------------------------------------------------------------ */
/* Panels                                                               */
/* ------------------------------------------------------------------ */

function Tab({ active, className, children }) {
  return (
    <div
      className={
        "flex items-center justify-center border-x-2 border-b-[3px] text-[20px] leading-[24px] tracking-[0.25px] text-[#e4e4e4] " +
        (active
          ? "relative -mt-[2px] border-x-[#3a3a3a] border-b-[#8f1a12] bg-[#1c1f22] "
          : "border-x-[#3a3a3a] border-b-[#4a4a4a] bg-black pb-[2px] ") +
        className
      }
    >
      {children}
    </div>
  );
}

function Header() {
  return (
    <header className="flex h-[103px] shrink-0 border-b border-[#3b3e40] bg-[#8f1a12] pl-6">
      <div className="mt-[16px]">
        <Logo />
      </div>
      <div className="ml-[23px] flex flex-col whitespace-nowrap text-white">
        <h1 className="mt-[9px] text-[39px] leading-[48px] tracking-[0.78px]">
          Mapping Mobility Changes in Response to COVID-19
        </h1>
        <p className="mt-[6px] text-[23px] leading-[28px] tracking-[0.28px]">by GeoDS Lab @ UW-Madison</p>
      </div>
      <div className="mt-[24px] ml-auto flex h-[54px]">
        <div className="flex w-[254px] items-center border-2 border-r-0 border-[#5b5b5b] bg-[#222] pb-[3px] pl-[4px] text-[22px] text-[#b0b0b0]">
          2020/3/15
        </div>
        <div className="flex w-[53px] items-center justify-center border-2 border-[#4a90e8] bg-[#222]">
          <CalendarIcon />
        </div>
        <div className="-ml-[1px] flex w-[53px] items-center justify-center border-2 border-[#4a90e8] bg-[#222]">
          <ClockIcon />
        </div>
        <div className="mt-px ml-[12px] flex w-[286px] items-center justify-between border-2 border-[#5b5b5b] bg-[#222] pr-[12px] pl-[6px] text-[21px] tracking-[0.2px] text-[#b0b0b0]">
          New York
          <svg width="22" height="13" viewBox="0 0 22 13" fill="none" stroke="#606060" strokeWidth="1.600">
            <path d="M1 1H21L11 11.500Z" />
          </svg>
        </div>
      </div>
      <div className="mt-[35px] mr-[16px] ml-[40px] flex w-[31px] flex-col gap-[8px]">
        <div className="h-[4px] bg-[#f4f4f4]" />
        <div className="h-[4px] bg-[#f4f4f4]" />
        <div className="h-[4px] bg-[#f4f4f4]" />
      </div>
    </header>
  );
}

function LegendPanel() {
  return (
    <section className="h-[703px] border border-[#3c3c3c] bg-[#1c1f22] pr-[2px] text-[#e9e9e9]">
      <h2 className="mt-[18px] text-center text-[30px] leading-[36px] font-bold tracking-[1px] text-white">Legend</h2>
      <div className="mt-[30px] text-center text-[20px] leading-[27.3px] tracking-[0.27px] whitespace-nowrap">
        <p>Red color represents an INCREASE in mobility;</p>
        <p>Blue color represents a DECREASE in mobility.</p>
        <p>Definitions and methodology found in Methods tab.</p>
      </div>
      <p className="mt-[29px] ml-[13px] text-[23px] leading-[28px] tracking-[0.1px]">US County</p>
      <p className="mt-[42px] ml-[13px] text-[23px] leading-[28px] tracking-[0.58px]">Mobility Change (%)</p>
      <ul className="mt-[3px] ml-[20px]">
        {LEGEND.map(([color, label]) => (
          <li key={label} className="flex h-[49.750px] items-center gap-[15px] text-[22.500px] leading-[28px] tracking-[0.100px]">
            <Swatch color={color} />
            {label}
          </li>
        ))}
      </ul>
    </section>
  );
}

function PercentPanel() {
  const a = (48.8 * Math.PI) / 180;
  const r = 69;
  return (
    <section className="relative mt-[19px] flex h-[343px] flex-col items-center border border-[#3c3c3c] bg-[#1c1f22] pr-[2px] text-[#e9e9e9]">
      <h2 className="mt-[18px] text-[30px] leading-[36px] font-bold tracking-[0.300px] text-white">Percent Change in Mobility</h2>
      <div className="mt-[26px] grid">
        <svg width="160" height="160" viewBox="-80 -80 160 160" className="col-start-1 row-start-1" fill="none" strokeWidth="20">
          <circle r={r} stroke="#c4c4c4" />
          <path d={`M0 ${-r}A${r} ${r} 0 0 1 ${r * Math.sin(a)} ${-r * Math.cos(a)}`} stroke="#1e446e" />
        </svg>
        <span className="col-start-1 row-start-1 self-center text-center text-[32px] leading-[40px] tracking-[0.200px] text-white">
          -72.9%
        </span>
      </div>
      <p className="mt-[23px] w-[450px] text-center text-[23px] leading-[33px] tracking-[0.350px]">
        Percent change in mobility in the selected regions
      </p>
      <ExpandButton />
    </section>
  );
}

function MapPanel() {
  return (
    <section className="relative h-[750px] border border-[#3c3c3c] bg-[#222327]">
      <UsMap />
      <div className="absolute top-[8px] left-[12px] flex h-[54px] w-[95px] items-center bg-[#333]">
        <div className="flex w-[51px] items-center justify-center pb-[2px]">
          <SelectIcon />
        </div>
        <div className="h-[50px] w-px bg-[#505050]" />
        <div className="flex flex-1 items-center justify-center">
          <svg width="22" height="13" viewBox="0 0 22 13" fill="none" stroke="#b4b4b4" strokeWidth="1.800">
            <path d="M1 1H21L11 11.500Z" />
          </svg>
        </div>
      </div>
      <div className="absolute top-[10px] right-[14px] flex h-[54px] w-[213px] items-center justify-between bg-[#333] pr-[12px] pl-[13px]">
        <SearchIcon />
        <HomeIcon />
        <ListIcon />
        <GridIcon />
      </div>
      <div className="absolute right-[12px] bottom-[42px] flex h-[95px] w-[51px] flex-col items-center gap-[22px] border border-[#4a4a4a] bg-[#333] pt-[11px]">
        <svg width="22" height="22" viewBox="0 0 22 22" stroke="#b4b4b4" strokeWidth="2.200">
          <path d="M11 1V21M1 11H21" />
        </svg>
        <svg width="22" height="22" viewBox="0 0 22 22" stroke="#b4b4b4" strokeWidth="2.600">
          <path d="M1 11H21" />
        </svg>
      </div>
      <div className="absolute right-[17px] bottom-[10px] flex h-[24px] w-[226px] items-center justify-center bg-[#bfbfc1] text-[20px] tracking-[0.500px] whitespace-nowrap text-[#3a3a3a]">
        Esri, HERE | Esri, HERE
      </div>
    </section>
  );
}

const px = (i) => 617.2 + i * 18.06;
const py = (v) => 1125 - v * 14.8;

function ChartPanel() {
  const points = SERIES.map((v, i) => (v === null ? null : [px(i), py(v)])).filter(Boolean);
  return (
    <section className="mt-[17px] h-[296px] border border-b-2 border-[#3c3c3c] bg-[#1c1f22]">
      <h2 className="mt-[13px] text-center text-[22px] leading-[26px] font-bold tracking-[0.870px] text-white">
        Mobility (Median of Max Travel Distance, km) Over Time
      </h2>
      <svg width="1473" height="250" viewBox="524.500 930 1473 250" className="block font-['Lato']">
        <g stroke="#37393b" strokeDasharray="6 5" strokeWidth="1.300" fill="none">
          <path d="M608 977.500H1943M608 1051.500H1943" />
          {X_LABELS.slice(1).map((l, i) => (
            <path key={l} d={`M${(px(i * 6 + 5) + 9).toFixed(1)} 982V1125`} />
          ))}
        </g>
        <path d="M608 977V1125M598 977.500h10M598 1051.500h10" fill="none" stroke="#5d5f61" strokeWidth="1.400" />
        <path d="M598 1125H1945" stroke="#6a6a6a" strokeWidth="2" />
        <g fontSize="18" fill="#e4e4e4">
          {X_LABELS.map((l, i) => (
            <g key={l}>
              <path d={`M${px(i * 6).toFixed(1)} 1125v8`} stroke="#5d5f61" strokeWidth="1.300" />
              <text x={px(i * 6) - 2} y="1162.500" textAnchor="middle">
                {l}
              </text>
            </g>
          ))}
          <text x="587.500" y="985" textAnchor="end">10</text>
          <text x="587.500" y="1058.500" textAnchor="end">5</text>
          <text x="587.500" y="1133" textAnchor="end">0</text>
        </g>
        <path d={toD(points, false)} fill="none" stroke="#7cabf5" strokeWidth="1.500" />
        {points.map(([x, y], i) => (
          <g key={i}>
            <circle cx={x} cy={y} r="7.200" fill="#5c87c8" fillOpacity="0.7" />
            <circle cx={x} cy={y} r="4.300" fill="#84b3fb" />
          </g>
        ))}
      </svg>
    </section>
  );
}

function CountyList() {
  return (
    <section className="flex h-[1111px] w-[357px] overflow-hidden border border-l-2 border-[#3c3c3c] bg-[#1c1f22]">
      <ul className="min-w-0 flex-1">
        {COUNTIES.map(([name, color]) => (
          <li
            key={name}
            className="flex h-[83.800px] items-center gap-[23px] border-b-2 border-[#4b4d4f] pl-[24px] text-[23px] leading-[28px] tracking-[0.600px] text-[#e9e9e9]"
          >
            <Swatch color={color} />
            {name}
          </li>
        ))}
      </ul>
      <div className="w-[12px] bg-[#3d3d3d]">
        <div className="h-[240px] bg-[#606060]" />
      </div>
    </section>
  );
}

export default function App() {
  return (
    <div className="flex h-[1250px] w-[2386px] flex-col overflow-hidden border-t-2 border-b border-l-2 border-t-[#e9eaea] border-b-[#3b3e40] border-l-[#d8d8d8] bg-black font-['Lato','Open_Sans',sans-serif] antialiased">
      <Header />
      <main className="flex flex-1 pt-[17px] pl-[17px]">
        <div className="w-[488px]">
          <LegendPanel />
          <div className="flex h-[45px] items-stretch pl-[21px]">
            <Tab active className="w-[111px]">Legend</Tab>
            <Tab className="ml-[8px] w-[123px]">Methods</Tab>
            <Tab className="ml-[8px] w-[107px]">Credits</Tab>
          </div>
          <PercentPanel />
        </div>
        <div className="ml-[16px] w-[1475px]">
          <MapPanel />
          <ChartPanel />
          <div className="flex h-[43px] items-stretch pl-[21px]">
            <Tab active className="w-[226px]">Mobility Time Series</Tab>
            <Tab className="ml-[8px] w-[264px]">Home Dwell Time Series</Tab>
          </div>
        </div>
        <div className="ml-[16px]">
          <CountyList />
        </div>
      </main>
    </div>
  );
}
